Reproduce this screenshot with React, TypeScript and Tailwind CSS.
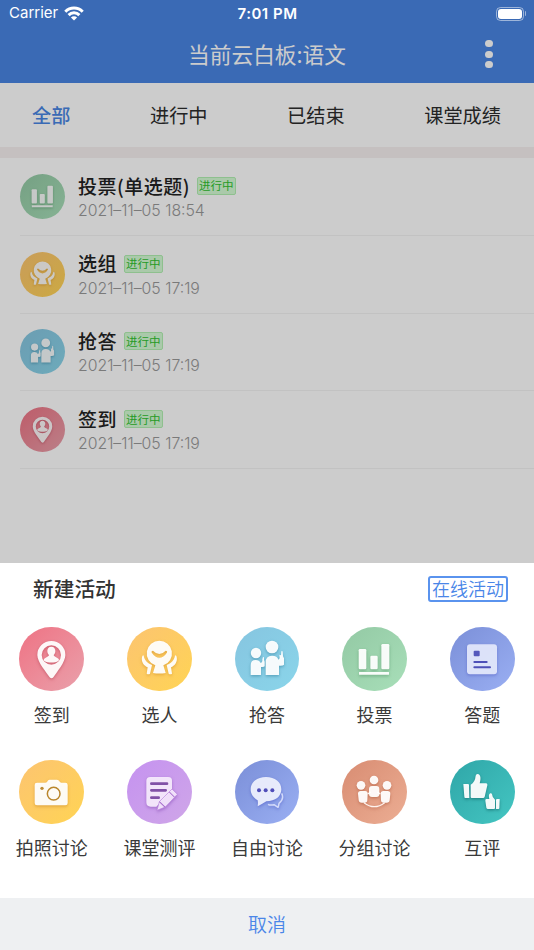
import type { ReactNode } from 'react';
import clsx from 'clsx';

type IconName =
  | 'checkin'
  | 'pick'
  | 'answer'
  | 'vote'
  | 'quiz'
  | 'camera'
  | 'review'
  | 'chat'
  | 'group'
  | 'mutual';

interface Activity {
  icon: IconName;
  title: string;
  time: string;
}

const tabs = ['全部', '进行中', '已结束', '课堂成绩'];

const activities: Activity[] = [
  { icon: 'vote', title: '投票(单选题)', time: '2021–11–05 18:54' },
  { icon: 'pick', title: '选组', time: '2021–11–05 17:19' },
  { icon: 'answer', title: '抢答', time: '2021–11–05 17:19' },
  { icon: 'checkin', title: '签到', time: '2021–11–05 17:19' },
];

const actions: { icon: IconName; label: string }[] = [
  { icon: 'checkin', label: '签到' },
  { icon: 'pick', label: '选人' },
  { icon: 'answer', label: '抢答' },
  { icon: 'vote', label: '投票' },
  { icon: 'quiz', label: '答题' },
  { icon: 'camera', label: '拍照讨论' },
  { icon: 'review', label: '课堂测评' },
  { icon: 'chat', label: '自由讨论' },
  { icon: 'group', label: '分组讨论' },
  { icon: 'mutual', label: '互评' },
];

const backgrounds: Record<IconName, string> = {
  checkin: 'from-[#ee7284] to-[#e9a0ab]',
  pick: 'from-[#fcc470] to-[#ffd453]',
  answer: 'from-[#86c5e0] to-[#8ad5ea]',
  vote: 'from-[#93c9a4] to-[#a8dfb9]',
  quiz: 'from-[#7b8fd8] to-[#9aaff3]',
  camera: 'from-[#fcc470] to-[#ffd453]',
  review: 'from-[#c592f0] to-[#cfa6e8]',
  chat: 'from-[#7b8fd8] to-[#9aaff3]',
  group: 'from-[#d88c72] to-[#ecae94]',
  mutual: 'from-[#2fa6a8] to-[#44c6c2]',
};

const shadows: Record<IconName, string> = {
  checkin: 'drop-shadow-[0_4px_5px_rgba(170,50,70,0.5)]',
  pick: 'drop-shadow-[0_4px_5px_rgba(200,130,20,0.5)]',
  answer: 'drop-shadow-[0_4px_5px_rgba(30,110,140,0.5)]',
  vote: 'drop-shadow-[0_4px_5px_rgba(60,130,80,0.5)]',
  quiz: 'drop-shadow-[0_4px_5px_rgba(70,80,190,0.5)]',
  camera: 'drop-shadow-[0_4px_5px_rgba(190,120,20,0.5)]',
  review: 'drop-shadow-[0_4px_5px_rgba(120,60,170,0.5)]',
  chat: 'drop-shadow-[0_4px_5px_rgba(60,70,190,0.5)]',
  group: 'drop-shadow-[0_4px_5px_rgba(160,70,40,0.5)]',
  mutual: 'drop-shadow-[0_4px_5px_rgba(10,90,90,0.6)]',
};

// Glyphs share one 194-unit square
const glyphs: Record<IconName, ReactNode> = {
  checkin: (
    <>
      <path
        fillRule="evenodd"
        d="M97 42a42 42 0 0 1 42 42c0 22-26 51-36 67q-5 6-11 0C82 135 55 106 55 84a42 42 0 0 1 42-42ZM97 55a29 29 0 1 0 0 58 29 29 0 0 0 0-58Z"
      />
      <path d="M97 59c8 0 12 6 12 13 0 5-2 9-5 12 0 5 11 7 15 12 1 2 1 4-1 6-10 6-32 6-42 0-2-2-2-4-1-6 4-5 15-7 15-12-3-3-5-7-5-12 0-7 4-13 12-13Z" />
    </>
  ),
  pick: (
    <>
      <path
        fillRule="evenodd"
        d="M97 41a38 38 0 0 1 12 74l7 23q-19 3-38 0l7-23A38 38 0 0 1 97 41ZM78 71c-4 0-6 4-3 7 11 19 33 19 44 0 3-3 1-7-3-7q-19 20-38 0Z"
      />
      <path d="M50 86c3 14 11 22 25 28l-6 26q-5 3-10 0l3-19c-14-6-21-20-16-34q3-4 4-1Z" />
      <path d="M144 86c-3 14-11 22-25 28l6 26q5 3 10 0l-3-19c14-6 21-20 16-34q-3-4-4-1Z" />
    </>
  ),
  answer: (
    <>
      <circle cx="63" cy="78" r="15.5" />
      <path d="M47 144v-29q0-16 15-16 11 0 15 9 6-1 5-11l2-7q3-1 3 3v6l2 5v14q-2 3-11 2v24Z" />
      <circle cx="111" cy="60" r="19" />
      <path d="M92 144v-38q0-20 19-20 16 0 19 12l4-4-1-11 5 2 1-12q3-2 4 1l1 14 3 6v19q-3 4-15 3v28Z" />
    </>
  ),
  vote: (
    <>
      <rect x="50" y="66" width="23" height="61" rx="4" />
      <rect x="85" y="86" width="22" height="41" rx="4" />
      <rect x="118" y="51" width="24" height="76" rx="4" />
      <rect x="51" y="135" width="90" height="8" rx="1" />
    </>
  ),
  quiz: (
    <>
      <rect x="51" y="52" width="90" height="90" rx="9" fill="#e3e8fb" />
      <rect x="71" y="71" width="18" height="17" rx="3" fill="#4d50b8" />
      <path d="M73 105h37M73 121h47" stroke="#4d50b8" strokeWidth="6" strokeLinecap="round" />
    </>
  ),
  camera: (
    <>
      <path d="M54 68h25q5 0 7-5 2-4 6-4h22q5 0 7 5 2 4 6 4h12q7 0 7 7v54q0 7-7 7H54q-7 0-7-7V75q0-7 7-7Z" />
      <circle cx="104" cy="101" r="19" fill="none" stroke="#b9862b" strokeWidth="4.5" />
      <circle cx="69" cy="85" r="5" fill="#b9862b" />
    </>
  ),
  review: (
    <>
      <path d="M70 51h53q13 0 12 13v25L88 140H71q-13 0-13-13V63q0-12 12-12Z" fill="#f6ebfc" />
      <path d="M73 71h47M73 91h43M73 113h22" stroke="#8150a7" strokeWidth="8" strokeLinecap="round" />
      <path d="m135 87 16 16-36 38-25 10 7-26Z" fill="#f3e6fb" stroke="#b984dc" strokeWidth="2" />
      <path d="m127 96 15 15M97 125l17 16" stroke="#a66bcc" strokeWidth="3" />
    </>
  ),
  chat: (
    <>
      <path d="M93 51c27 0 46 15 46 37 0 21-18 36-45 36q-14 9-26 15 2-9 0-18c-14-8-21-19-21-33 0-22 19-37 46-37Z" fill="#eef1fd" />
      <path d="M140 100c5 10 3 21-8 30q-1 7-3 12l-12-8q-11 3-18-1" fill="none" stroke="#d3dafa" strokeWidth="4.5" strokeLinejoin="round" />
      <circle cx="72" cy="91" r="6" fill="#4845b5" />
      <circle cx="92" cy="91" r="6" fill="#4845b5" />
      <circle cx="112" cy="91" r="6" fill="#4845b5" />
    </>
  ),
  group: (
    <>
      <circle cx="96" cy="60" r="13" />
      <circle cx="57" cy="76" r="13" />
      <circle cx="135" cy="76" r="13" />
      <path d="M66 128q31 24 62 0" fill="none" stroke="#fff3ee" strokeWidth="4" />
      <path d="m77 102 9-6M115 102l-9-6" stroke="#fff3ee" strokeWidth="4" />
      <rect x="81" y="78" width="31" height="33" rx="9" />
      <path d="M56 93h13q8 0 8 8l-1 19q0 8-8 8h-9q-8 0-9-8l-2-19q0-8 8-8ZM124 93h13q8 0 8 8l-2 19q-1 8-9 8h-9q-8 0-8-8l-1-19q0-8 8-8Z" />
    </>
  ),
  mutual: (
    <>
      <path d="M40 72h14q3 0 3 4l1 38H46q-3 0-3-4Z" />
      <path d="M62 74q13-7 15-27 1-6 7-5c9 2 9 16 5 28h20q4 1 3 6l-8 34q-1 4-5 4H65q-3 0-3-4Z" />
      <path d="M149 117h-8q-3 0-3 3v27h7q3 0 3-3Z" />
      <path d="M135 119q-8-5-9-16-1-4-5-3c-5 2-5 9-3 17h-9q-4 0-3 5l3 21q1 4 5 4h18q3 0 3-4Z" />
    </>
  ),
};

const ActivityIcon = ({ name, className }: { name: IconName; className: string }) => (
  <div className={clsx('shrink-0 rounded-full bg-linear-to-br', backgrounds[name], className)}>
    <svg viewBox="0 0 194 194" className="size-full" fill="#fff" fillOpacity="0.95">
      <g className={shadows[name]}>{glyphs[name]}</g>
    </svg>
  </div>
);

const StatusBar = () => (
  <div className="relative z-20 flex h-[27px] items-center justify-between pr-2 pl-[9px] font-['Inter','Liberation_Sans',sans-serif] text-[15px] text-white">
    <div className="flex flex-1 items-center gap-1.5">
      <span>Carrier</span>
      <svg viewBox="0 0 20 15" className="h-[15px] w-5" fill="none" stroke="#fff" strokeWidth="3">
        <path d="M1.3 5.7a12.3 12.3 0 0 1 17.4 0M4.6 9.1a7.6 7.6 0 0 1 10.8 0" />
        <path d="M10 14.6 6.9 11.5a4.4 4.4 0 0 1 6.2 0Z" fill="#fff" stroke="none" />
      </svg>
    </div>
    <span className="pt-px font-semibold tracking-[0.5px]">7:01 PM</span>
    <div className="flex flex-1 items-center justify-end gap-px">
      <div className="h-3.5 w-7 rounded-[4.5px] border border-white/50 p-px">
        <div className="h-full rounded-[3px] bg-white" />
      </div>
      <div className="h-[5px] w-[1.5px] rounded-r-full bg-white/50" />
    </div>
  </div>
);

const ActivityRow = ({ icon, title, time }: Activity) => (
  <li className="ml-5 flex h-[77.8px] items-center border-b border-[#f3f3f3]">
    <ActivityIcon name={icon} className="size-[45px]" />
    <div className="ml-[13px] flex flex-col pt-[3px]">
      <div className="flex h-[26px] items-center gap-[7px]">
        <h2 className="text-[19px] font-medium tracking-[0.5px] text-[#222]">{title}</h2>
        <span className="flex h-[18px] items-center rounded-[2px] border border-[#b2f0b2] bg-[#d5fcd5] px-px text-[11.5px] text-[#2fc22f]">
          进行中
        </span>
      </div>
      <p className="font-['Inter','Liberation_Sans',sans-serif] text-[15.8px] leading-6 font-light text-[#999]">{time}</p>
    </div>
  </li>
);

const App = () => {
  return (
    <div className="relative flex h-[950px] w-[534px] flex-col overflow-hidden bg-white font-['Noto_Sans_CJK_SC',sans-serif]">
      <header className="h-[83px] bg-[#4985e3]">
        <StatusBar />
        <div className="flex h-[54px] items-center">
          <div className="w-[90px]" />
          <h1 className="flex-1 text-center text-[21.7px] text-white">当前云白板:语文</h1>
          <div className="flex w-[90px] flex-col items-center gap-[3.5px]">
            <span className="h-[7px] w-2 rounded-full bg-white" />
            <span className="h-[7px] w-2 rounded-full bg-white" />
            <span className="h-[7px] w-2 rounded-full bg-white" />
          </div>
        </div>
      </header>

      <nav className="flex h-16 shrink-0 items-center justify-between pr-[33px] pl-8 text-[19.2px]">
        {tabs.map((tab, i) => (
          <span key={tab} className={i === 0 ? 'font-medium text-[#4985e3]' : 'text-[#2c2c2c]'}>
            {tab}
          </span>
        ))}
      </nav>
      <div className="h-[11px] shrink-0 bg-[#f7f0f1]" />

      <ul className="flex-1">
        {activities.map(item => (
          <ActivityRow key={item.title} {...item} />
        ))}
      </ul>

      {/* Dimmed backdrop behind the sheet */}
      <div className="absolute inset-0 z-10 bg-black/20" />

      <section className="relative z-20 flex h-[387.5px] shrink-0 flex-col bg-white">
        <div className="flex h-[52px] items-center justify-between pr-[26px] pl-[33px]">
          <h2 className="text-[20.7px] font-medium text-[#333]">新建活动</h2>
          <button className="flex h-[26px] items-center rounded-[3px] border-2 border-[#5a93ee] px-[2px] pb-px text-[18px] font-[350] text-[#4a86e8]">
            在线活动
          </button>
        </div>
        <div className="-ml-0.5 grid w-[538px] grid-cols-5 pt-3">
          {actions.map(({ icon, label }) => (
            <div key={icon} className="flex h-[133px] flex-col items-center">
              <ActivityIcon name={icon} className="size-[64.7px]" />
              <span className="mt-2.5 text-[18px] leading-[26px] text-[#3a3a3a]">{label}</span>
            </div>
          ))}
        </div>
        <button className="mt-auto h-[52px] w-full bg-[#eef0f2] text-[19px] font-[350] text-[#4a86e8]">取消</button>
      </section>
    </div>
  );
};

export default App;
